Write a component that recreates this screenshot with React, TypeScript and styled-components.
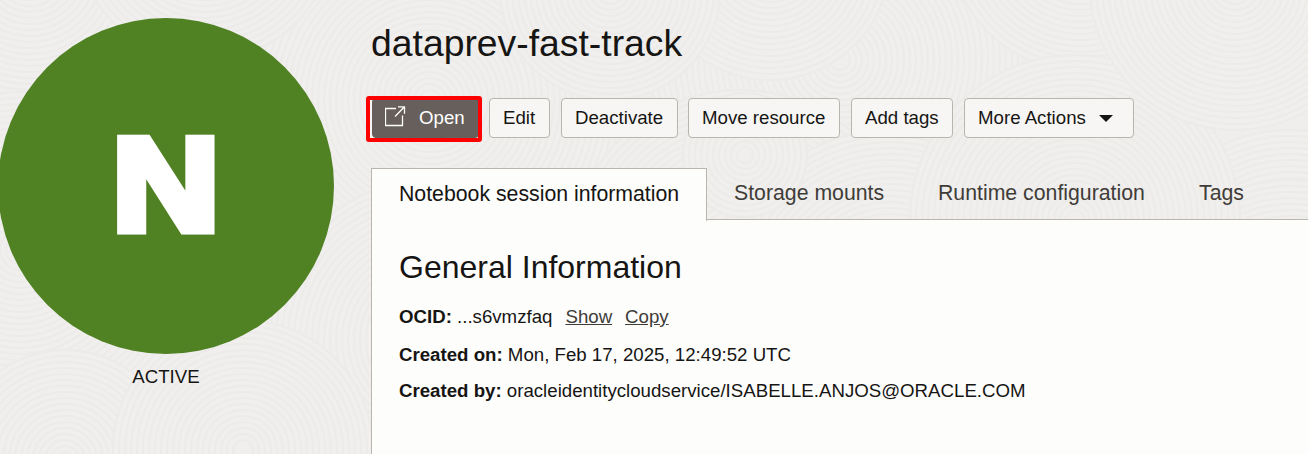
import React from "react";
import styled, { createGlobalStyle } from "styled-components";

const GlobalStyle = createGlobalStyle`
  * { box-sizing: border-box; }
  body {
    margin: 0;
    overflow: hidden;
    background: #efeeec;
    color: #161513;
    font-family: "Liberation Sans", Arial, sans-serif;
  }
`;

const Page = styled.div`
  position: relative;
  display: flex;
  width: 1308px;
  height: 454px;
  overflow: hidden;
`;

const Backdrop = styled.svg`
  position: absolute;
  inset: 0;
`;

const StatusColumn = styled.aside`
  position: relative;
  flex: none;
  width: 371px;
  padding-top: 18px;
`;

const StatusCircle = styled.div`
  display: flex;
  align-items: center;
  justify-content: center;
  width: 336px;
  height: 336px;
  margin-left: -2px;
  border-radius: 50%;
  background: #508223;
`;

const StatusLetter = styled.span`
  margin-top: -4px;
  color: #fff;
  font-size: 132.5px;
  font-weight: 700;
  line-height: 1;
  transform: scaleX(1.12);
  -webkit-text-stroke: 9px #fff;
`;

const StatusLabel = styled.div`
  width: 332px;
  margin-top: 11px;
  text-align: center;
  font-size: 18.67px;
  line-height: 24px;
`;

const Main = styled.main`
  position: relative;
  display: flex;
  flex: 1;
  flex-direction: column;
  min-width: 0;
`;

const Title = styled.h1`
  margin: 20px 0 0;
  font-size: 37.33px;
  font-weight: 400;
  line-height: 46px;
`;

const Toolbar = styled.div`
  display: flex;
  height: 40px;
  margin-top: 32px;
`;

const Button = styled.button<{ $width: number; $gap?: number; $primary?: boolean }>`
  display: flex;
  align-items: center;
  width: ${(p) => p.$width}px;
  height: 40px;
  margin: 0 ${(p) => p.$gap ?? 11}px 0 0;
  padding: 0 0 1px 13px;
  border: 1px solid ${(p) => (p.$primary ? "#665f5b" : "#bab5af")};
  border-radius: 4px;
  background: ${(p) => (p.$primary ? "#665f5b" : "#f7f6f4")};
  color: ${(p) => (p.$primary ? "#fff" : "#161513")};
  font: 18.67px "Liberation Sans", Arial, sans-serif;
  white-space: nowrap;

  svg { flex: none; }
`;

const Highlighted = styled.div`
  position: relative;
  padding-left: 1px;
  &::before {
    content: "";
    position: absolute;
    inset: 0 9px 0 -1px;
    background: #f7f6f4;
  }
  ${Button} { position: relative; width: 107px; padding-left: 12px; }
  &::after {
    content: "";
    position: absolute;
    inset: -2px 7px -4px -5px;
    border: 4px solid #fe0000;
    border-radius: 3px;
  }
`;

const OpenIcon = styled.svg`
  margin: -3px 13px 0 0;
`;

const Caret = styled.svg`
  margin: 1px 0 0 13px;
`;

const Tabs = styled.nav`
  display: flex;
  align-items: flex-end;
  height: 53px;
  margin-top: 30px;
`;

const Tab = styled.div<{ $width?: number }>`
  flex: ${(p) => (p.$width ? "none" : "1")};
  width: ${(p) => p.$width ?? 0}px;
  height: 52px;
  margin-bottom: 1px;
  padding-left: 27px;
  border-bottom: 1px solid #bab5af;
  color: #403c38;
  font-size: 21.28px;
  line-height: 51px;
  white-space: nowrap;
`;

const ActiveTab = styled(Tab)`
  position: relative;
  height: 53px;
  margin-bottom: 0;
  border: 1px solid #bab5af;
  border-bottom: 0;
  background: #fdfdfc;
  color: #161513;
  line-height: 50px;
`;

const Panel = styled.section`
  flex: 1;
  margin-top: -1px;
  padding: 24px 0 0 27px;
  border-left: 1px solid #bab5af;
  background: #fdfdfc;
`;

const Heading = styled.h2`
  margin: 0 0 13px;
  font-size: 32px;
  font-weight: 400;
  line-height: 46px;
`;

const Field = styled.p<{ $height: number }>`
  height: ${(p) => p.$height}px;
  margin: 0;
  font-size: 18.67px;
  line-height: 28px;
  white-space: nowrap;
`;

const Link = styled.a`
  margin-left: 13px;
  color: #403c38;
  text-decoration: underline;
`;

const swirls = [
  [840, 60, 190], [430, 100, 190], [20, 250, 170], [430, 340, 160], [1290, 290, 160],
  [30, -30, 120], [205, -70, 130], [740, 260, 170], [890, 300, 170], [1290, 330, 150],
  [1080, -60, 130], [770, -40, 120], [1075, 220, 165], [1235, -15, 145],
  [610, -10, 110], [745, 155, 62], [65, 460, 110], [243, 450, 130],
];

const RING_SPACING = 6;

const Swirls = () => (
  <Backdrop width="1308" height="454" viewBox="0 0 1308 454">
    {swirls.map(([x, y, radius], i) => (
      <g key={i} fill="none" stroke="#ecebe9" strokeWidth="2">
        <circle cx={x} cy={y} r={radius} fill="#f0efed" />
        {Array.from({ length: Math.floor(radius / RING_SPACING) }, (_, n) => (
          <circle key={n} cx={x} cy={y} r={radius - n * RING_SPACING} />
        ))}
      </g>
    ))}
  </Backdrop>
);

export default function App() {
  return (
    <>
      <GlobalStyle />
      <Page>
        <Swirls />
        <StatusColumn>
          <StatusCircle><StatusLetter>N</StatusLetter></StatusCircle>
          <StatusLabel>ACTIVE</StatusLabel>
        </StatusColumn>
        <Main>
          <Title>dataprev-fast-track</Title>
          <Toolbar>
            <Highlighted>
              <Button $width={107} $gap={10} $primary>
                <OpenIcon width="21" height="21" viewBox="0 0 21 21" fill="none" stroke="#fff" strokeWidth="1.3">
                  <path d="M11 2.5H.5v17h17V9.5M13 .8h6.5v7M19.5.8 10 10.5" />
                </OpenIcon>
                Open
              </Button>
            </Highlighted>
            <Button $width={61}>Edit</Button>
            <Button $width={117} $gap={10}>Deactivate</Button>
            <Button $width={152}>Move resource</Button>
            <Button $width={102}>Add tags</Button>
            <Button $width={170}>
              More Actions
              <Caret width="14" height="7" viewBox="0 0 14 7"><path d="M0 0h14L7 7Z" fill="#161513" /></Caret>
            </Button>
          </Toolbar>
          <Tabs>
            <ActiveTab $width={336}>Notebook session information</ActiveTab>
            <Tab $width={204}>Storage mounts</Tab>
            <Tab $width={261}>Runtime configuration</Tab>
            <Tab>Tags</Tab>
          </Tabs>
          <Panel>
            <Heading>General Information</Heading>
            <Field $height={38}>
              <b>OCID:</b> ...s6vmzfaq<Link>Show</Link><Link>Copy</Link>
            </Field>
            <Field $height={36}><b>Created on:</b> Mon, Feb 17, 2025, 12:49:52 UTC</Field>
            <Field $height={36}><b>Created by:</b> oracleidentitycloudservice/ISABELLE.ANJOS@ORACLE.COM</Field>
          </Panel>
        </Main>
      </Page>
    </>
  );
}
